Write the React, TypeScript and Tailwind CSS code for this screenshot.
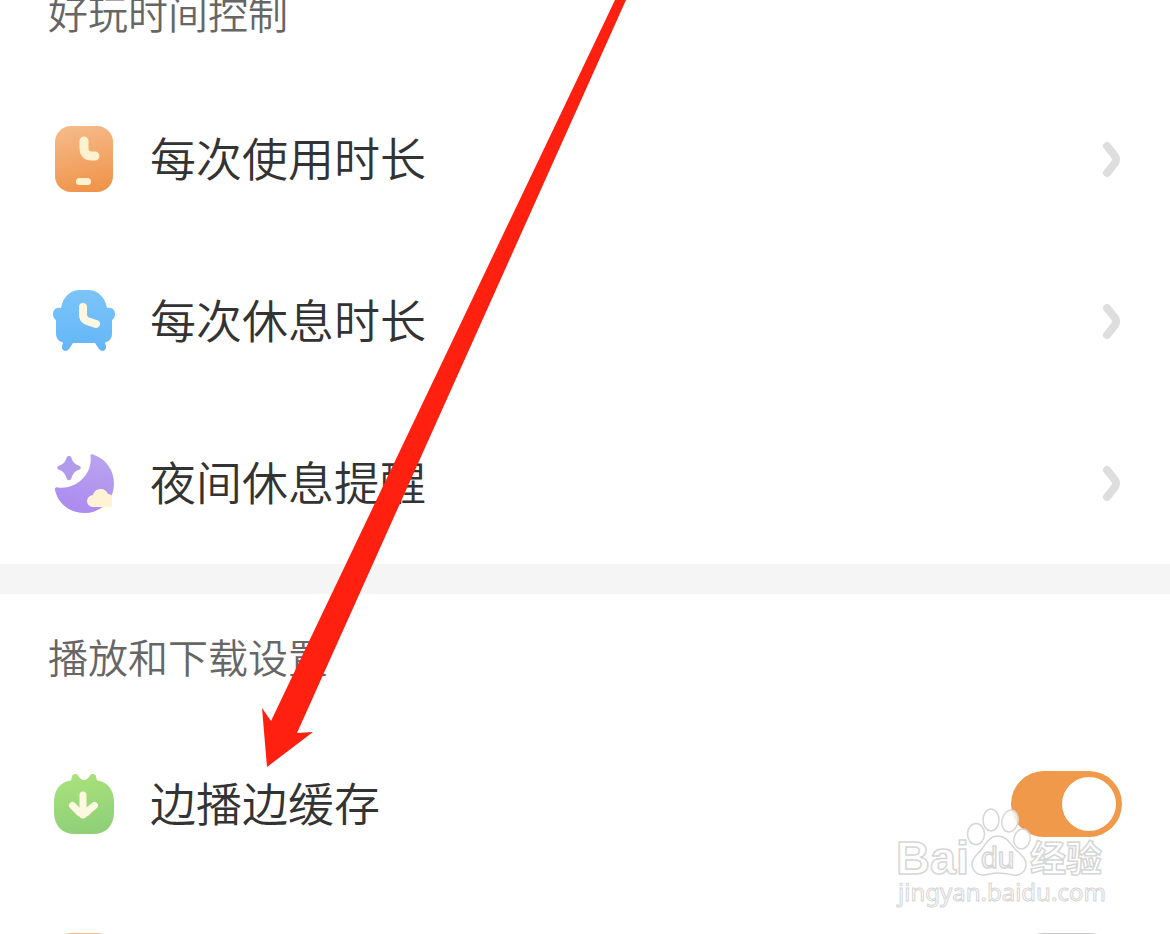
import type { ReactNode } from "react";

type RowProps = {
  icon: ReactNode;
  label: string;
};

const PhoneClockIcon = () => (
  <svg viewBox="0 0 72 72" className="h-[72px] w-[72px] shrink-0" aria-hidden="true">
    <defs>
      <linearGradient id="phone" x1="0.4" y1="0" x2="0.6" y2="1">
        <stop offset="0" stopColor="#f5b988" />
        <stop offset="1" stopColor="#f0944a" />
      </linearGradient>
    </defs>
    <rect x="7" y="3" width="58" height="66" rx="16" fill="url(#phone)" />
    <path d="M36 18v7q0 8 8 8h3" fill="none" stroke="#fff3cf" strokeWidth="9" strokeLinecap="round" />
    <rect x="28" y="55" width="15" height="7" rx="3.5" fill="#fff3cf" />
  </svg>
);

const SofaClockIcon = () => (
  <svg viewBox="0 0 72 72" className="h-[72px] w-[72px] shrink-0" aria-hidden="true">
    <defs>
      <linearGradient id="sofa" x1="0" y1="0" x2="0" y2="1">
        <stop offset="0" stopColor="#7cc4f8" />
        <stop offset="1" stopColor="#63b6f8" />
      </linearGradient>
    </defs>
    <path
      d="M13 23C15 12 22 5 32 5h8c10 0 17 7 19 18 5-1 8 2 8 6 0 3-1 5-3 6v13c0 5-2 8-6 9l-1 1 1 3c1 4-4 7-7 3l-4-6H25l-4 6c-3 4-8 1-7-3l1-3-1-1c-4-1-6-4-6-9V35c-2-1-3-3-3-6 0-4 3-7 8-6Z"
      fill="url(#sofa)"
    />
    <path d="M35 22v8q0 4 4 6l9 3" fill="none" stroke="#fff8e0" strokeWidth="8" strokeLinecap="round" strokeLinejoin="round" />
  </svg>
);

const MoonIcon = () => (
  <svg viewBox="0 0 72 72" className="h-[72px] w-[72px] shrink-0" aria-hidden="true">
    <defs>
      <linearGradient id="moon" x1="0.7" y1="0" x2="0.4" y2="1">
        <stop offset="0" stopColor="#baa3ee" />
        <stop offset="1" stopColor="#ab8bf0" />
      </linearGradient>
    </defs>
    <path
      d="M45 7.500C58 12 66 23 66 36.500 66 53 53 66 37 66 22 66 10 57 7 43c-.4-2 .8-3 3-2.500C27 43 45 28 42.500 9c-.2-1.500 1-2 2.500-1.500Z"
      fill="url(#moon)"
    />
    <path
      d="M21 9c1 0 2 .5 2.500 2 1.500 4 3 6 7 7.500 3 1 3 3.500 0 4.500-4 1.500-5.500 3.500-7 8-1 3-4 3-5 0-1.500-4.500-3-6.500-7-8-3-1-3-3.500 0-4.500 4-1.500 5.500-3.500 7-7.500C19 9.500 20 9 21 9Z"
      fill="#b19bea"
    />
    <path d="M46 60c-9 0-9-11-1-12 1-4 4-6 8-6 3 0 6 2 7 5 2 0 4 1 4 3v9c0 1-1 1-2 1Z" fill="#fff3d6" />
  </svg>
);

const DownloadIcon = () => (
  <svg viewBox="0 0 72 72" className="h-[72px] w-[72px] shrink-0" aria-hidden="true">
    <defs>
      <linearGradient id="download" x1="0.4" y1="0" x2="0.6" y2="1">
        <stop offset="0" stopColor="#a9e17c" />
        <stop offset="1" stopColor="#8ecf78" />
      </linearGradient>
    </defs>
    <path
      d="M23 12.500l1-4c1-3 4-3 6-1 2 3 4 4.500 6 4.500s4-1.500 6-4.500c2-2 5-2 6 1l1 4c11 1 17 10 17 21.500v10c0 14-8 22-21 22H27C14 66 6 58 6 44V34c0-11.500 6-20.500 17-21.500Z"
      fill="url(#download)"
    />
    <path
      d="M35 27v20M24.500 37.500l4 4q6.500 9 13 0l5-4"
      fill="none"
      stroke="#fff8e0"
      strokeWidth="7"
      strokeLinecap="round"
      strokeLinejoin="round"
    />
  </svg>
);

const CardIcon = () => (
  <svg viewBox="0 0 72 72" className="h-[72px] w-[72px] shrink-0" aria-hidden="true">
    <rect x="7" y="3" width="58" height="66" rx="16" fill="#f0bb8e" />
  </svg>
);

const LinkRow = ({ icon, label }: RowProps) => (
  <li>
    <button type="button" className="flex h-[162px] w-full items-center gap-[30px] px-12 text-left">
      {icon}
      <span className="flex-1 pb-[6px] text-[46px] leading-[60px]">{label}</span>
      <svg viewBox="0 0 24 40" className="h-10 w-6 shrink-0" aria-hidden="true">
        <path
          d="M9 7l8 10q2 3.500 0 7l-8 10"
          fill="none"
          stroke="#dedede"
          strokeWidth="8"
          strokeLinecap="round"
          strokeLinejoin="round"
        />
      </svg>
    </button>
  </li>
);

const toggleClass =
  "relative h-[66px] w-[111px] shrink-0 cursor-pointer appearance-none rounded-full bg-[#c8c8c8] before:absolute before:left-[6px] before:top-[6px] before:h-[54px] before:w-[54px] before:rounded-full before:bg-white checked:bg-[#f1994b] checked:before:left-[51px]";

const Watermark = () => (
  <svg
    viewBox="0 0 220 115"
    className="pointer-events-none absolute right-[58px] top-[800px] h-[115px] w-[220px] font-normal"
    fill="#fff"
    stroke="#d6d6d6"
    strokeWidth="1.500"
  >
    <g fillOpacity="0.800">
      <ellipse cx="84" cy="34" rx="8.5" ry="10.5" />
      <ellipse cx="99" cy="20" rx="8" ry="11" />
      <ellipse cx="118" cy="21" rx="8" ry="11" transform="rotate(12 118 21)" />
      <ellipse cx="130" cy="39" rx="8" ry="10" transform="rotate(12 130 39)" />
    </g>
    <path d="M106 36c8 0 12 7 17 13 6 6 11 9 11 15 0 8-6 12-13 11-5-1-10-2-15-2s-8 1-13 2c-7 1-13-4-13-11 0-6 5-9 10-15 5-7 8-13 16-13Z" />
    <text x="4" y="74" className="font-['Liberation_Sans',sans-serif] text-[47px] font-bold">
      Bai
    </text>
    <text x="89" y="68" className="font-['Liberation_Sans',sans-serif] text-[30px]">
      du
    </text>
    <text x="138" y="72" className="font-['Noto_Sans_CJK_SC',sans-serif] text-[36px] font-bold">
      经验
    </text>
    <text x="6" y="101" strokeWidth="1" className="font-['Noto_Sans',sans-serif] text-[24px]">
      jingyan.baidu.com
    </text>
  </svg>
);

const App = () => (
  <main className="relative h-screen overflow-hidden bg-white font-['Noto_Sans_CJK_SC',sans-serif] font-[350] text-[#333]">
    <section>
      <h2 className="px-12 pb-[54px] text-[40px] leading-6 text-[#666]">好玩时间控制</h2>
      <ul>
        <LinkRow icon={<PhoneClockIcon />} label="每次使用时长" />
        <LinkRow icon={<SofaClockIcon />} label="每次休息时长" />
        <LinkRow icon={<MoonIcon />} label="夜间休息提醒" />
      </ul>
    </section>

    <section className="border-t-[30px] border-[#f5f5f5]">
      <h2 className="px-12 pb-[37px] pt-8 text-[40px] leading-[60px] text-[#666]">播放和下载设置</h2>
      <label className="flex h-[162px] items-center gap-[30px] px-12">
        <DownloadIcon />
        <span className="flex-1 pb-[6px] text-[46px] leading-[60px]">边播边缓存</span>
        <input type="checkbox" role="switch" defaultChecked className={toggleClass} />
      </label>
      <label className="flex h-[162px] items-center justify-between px-12">
        <CardIcon />
        <input type="checkbox" role="switch" aria-label="开关" className={toggleClass} />
      </label>
    </section>

    <svg
      viewBox="0 0 366 767"
      className="pointer-events-none absolute left-[261px] top-0 h-[767px] w-[366px]"
      aria-hidden="true"
    >
      <path d="M354 0h11L36 733l16-1L6 767 1 708l9 13Z" fill="#ff2010" />
    </svg>

    <Watermark />
  </main>
);

export default App;
